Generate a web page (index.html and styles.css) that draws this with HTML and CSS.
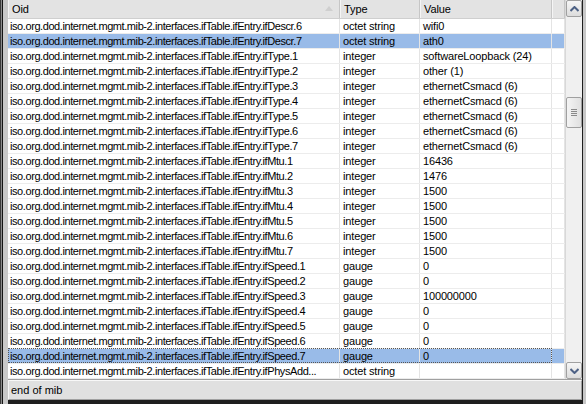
FILE: index.html
```html
<!DOCTYPE html>
<html>
<head>
<meta charset="utf-8">
<link rel="stylesheet" href="styles.css">
</head>
<body>
<div class="win">
  <div class="edge-left"><span class="e1"></span><span class="e2"></span><span class="e3"></span><span class="e4"></span></div>
  <div class="main">
    <div class="listwrap">
      <div class="list">
        <div class="head">
          <div class="hc c-oid">Oid<span class="sort"></span></div>
          <div class="hc c-type">Type</div>
          <div class="hc c-val">Value</div>
          <div class="hc c-pad"></div>
        </div>
        <div class="rows" id="rows"></div>
      </div>
      <div class="vscroll">
        <div class="sbtn up"><svg width="9" height="6" viewBox="0 0 9 6"><path d="M0.5 5 L4.5 1 L8.5 5" fill="none" stroke="#4d6185" stroke-width="2"/></svg></div>
        <div class="track">
          <div class="thumb"><span class="grip"></span><span class="grip"></span><span class="grip"></span><span class="grip"></span></div>
        </div>
        <div class="sbtn down"><svg width="9" height="6" viewBox="0 0 9 6"><path d="M0.5 1 L4.5 5 L8.5 1" fill="none" stroke="#4d6185" stroke-width="2"/></svg></div>
      </div>
    </div>
    <div class="status"><span class="stext">end of mib</span></div>
  </div>
  <div class="edge-right"></div>
</div>
<script src="app.js"></script>
</body>
</html>
```
FILE: app.js
```js
var p = "iso.org.dod.internet.mgmt.mib-2.interfaces.ifTable.ifEntry.";
var data = [
  ["ifDescr.6","octet string","wifi0"],
  ["ifDescr.7","octet string","ath0",1],
  ["ifType.1","integer","softwareLoopback (24)"],
  ["ifType.2","integer","other (1)"],
  ["ifType.3","integer","ethernetCsmacd (6)"],
  ["ifType.4","integer","ethernetCsmacd (6)"],
  ["ifType.5","integer","ethernetCsmacd (6)"],
  ["ifType.6","integer","ethernetCsmacd (6)"],
  ["ifType.7","integer","ethernetCsmacd (6)"],
  ["ifMtu.1","integer","16436"],
  ["ifMtu.2","integer","1476"],
  ["ifMtu.3","integer","1500"],
  ["ifMtu.4","integer","1500"],
  ["ifMtu.5","integer","1500"],
  ["ifMtu.6","integer","1500"],
  ["ifMtu.7","integer","1500"],
  ["ifSpeed.1","gauge","0"],
  ["ifSpeed.2","gauge","0"],
  ["ifSpeed.3","gauge","100000000"],
  ["ifSpeed.4","gauge","0"],
  ["ifSpeed.5","gauge","0"],
  ["ifSpeed.6","gauge","0"],
  ["ifSpeed.7","gauge","0",2],
  ["ifPhysAdd...","octet string",""]
];
var rows = document.getElementById("rows");
data.forEach(function (d) {
  var r = document.createElement("div");
  r.className = "row" + (d[3] ? " sel" : "") + (d[3] === 2 ? " focus" : "");
  [p + d[0], d[1], d[2], ""].forEach(function (t, i) {
    var c = document.createElement("div");
    c.className = "cell " + ["c-oid", "c-type", "c-val", "c-pad"][i];
    c.textContent = t;
    r.appendChild(c);
  });
  rows.appendChild(r);
});
```
FILE: styles.css
```css
html, body { margin: 0; padding: 0; }
body { background: #1e1e1e; font-family: "Liberation Sans", Arial, sans-serif; font-size: 11px; color: #000; }
.win { width: 586px; height: 404px; display: flex; overflow: hidden; }
.edge-left { width: 8px; display: flex; height: 404px; }
.edge-left span { display: block; height: 100%; }
.e1 { width: 1px; background: #3a3a3a; }
.e2 { width: 1px; background: #8c8c8c; }
.e3 { width: 1px; background: #141414; }
.e4 { width: 5px; background: #c8c8c8; }
.main { width: 574px; display: flex; flex-direction: column; height: 400px; background: #e0e0e0; }
.edge-right { width: 4px; background: #c8c8c8; border-left: 1px solid #1e1e1e; height: 404px; box-sizing: border-box; }
.listwrap { height: 379px; display: flex; background: #fff; }
.list { width: 557px; display: flex; flex-direction: column; }
.head { display: flex; height: 19px; box-sizing: border-box; background: #e3e3e3; border-bottom: 1px solid #cfcfcf; }
.hc { height: 18px; line-height: 18px; box-sizing: border-box; border-right: 1px solid #c6c6c6; border-left: 1px solid #f5f5f5; padding-left: 3px; position: relative; letter-spacing: -0.1px; }
.c-oid { width: 332px; }
.c-type { width: 80px; }
.c-val { width: 132px; }
.c-pad { width: 13px; }
.head .c-oid { padding-left: 3px; }
.sort { position: absolute; right: 6px; top: 6px; width: 0; height: 0; border-left: 4px solid transparent; border-right: 4px solid transparent; border-bottom: 5px solid #cfcfcf; }
.rows { display: flex; flex-direction: column; }
.row { display: flex; height: 15px; box-sizing: border-box; border-bottom: 1px solid #ececec; position: relative; }
.cell { line-height: 14px; height: 14px; box-sizing: border-box; border-right: 1px solid #e4e4e4; padding-left: 2px; white-space: nowrap; overflow: hidden; letter-spacing: -0.15px; }
.cell.c-oid { letter-spacing: -0.42px; }
.cell.c-type, .cell.c-val { padding-left: 3px; }
.row.sel { background: #99bbe8; }
.row.focus::after { content: ""; position: absolute; left: 0; top: -1px; width: 544px; height: 15px; box-sizing: border-box; border: 1px dotted #555; }
.vscroll { width: 17px; display: flex; flex-direction: column; background: #f0f0f0; border-left: 1px solid #d8d8d8; box-sizing: border-box; }
.sbtn { height: 17px; box-sizing: border-box; border: 1px solid #a0a0a0; border-radius: 2px; background: linear-gradient(#f6f6f6, #dcdcdc); display: flex; align-items: center; justify-content: center; }
.track { flex: 1; padding-top: 80px; }
.thumb { height: 31px; box-sizing: border-box; border: 1px solid #a0a0a0; border-radius: 2px; background: linear-gradient(90deg, #f4f4f4, #e0e0e0); display: flex; flex-direction: column; align-items: center; justify-content: center; gap: 1px; }
.grip { display: block; width: 6px; height: 1px; background: #8a8a8a; }
.status { height: 21px; box-sizing: border-box; border-top: 1px solid #a0a0a0; background: #e0e0e0; }
.stext { display: block; border: 1px solid; border-color: #f8f8f8 #a0a0a0 #a0a0a0 #f8f8f8; height: 20px; box-sizing: border-box; line-height: 18px; padding-left: 2px; }
```
